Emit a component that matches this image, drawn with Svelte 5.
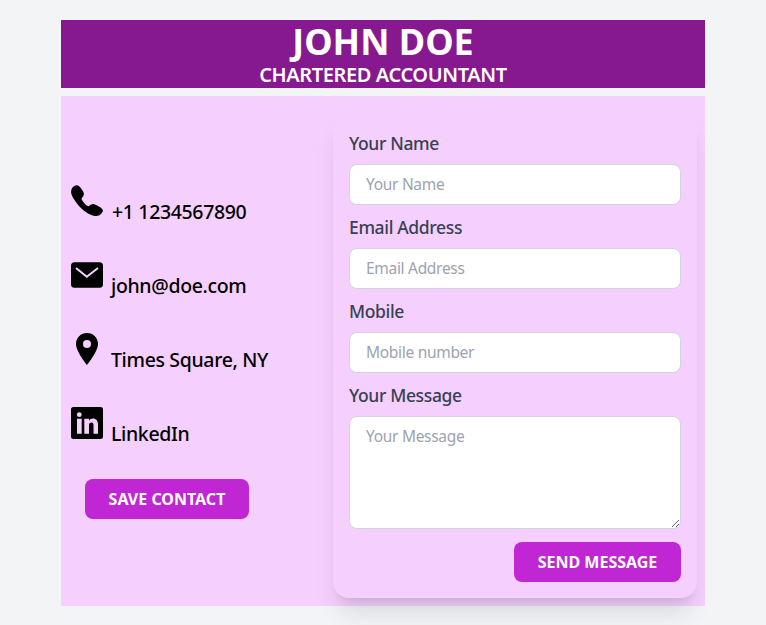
<script>
  // contact card: details on the left, message form on the right
  const fields = [
    { label: "Your Name", placeholder: "Your Name" },
    { label: "Email Address", placeholder: "Email Address" },
    { label: "Mobile", placeholder: "Mobile number" }
  ];
</script>

<main class="page">
  <header class="banner">
    <h1>JOHN DOE</h1>
    <h2>CHARTERED ACCOUNTANT</h2>
  </header>

  <section class="body">
    <div class="details">
      <p class="row">
        <svg viewBox="0 0 32 32"><path d="M1.500 2.500C3 .6 5.500-.6 7.500.8c2.200 1.600 4.600 5.200 5.300 7.500.4 1.700-.5 3.200-1.900 4.600-.4.500-.3 1.300.1 2.100 1.100 2 3 4.300 5.100 5.700.9.600 1.700.6 2.300.1 1.300-1.100 2.900-2.100 4.700-1.600 2.500.7 6.500 2.800 8.100 4.700 1 1.300.7 2.900-.4 4.200-1.400 1.700-3.300 3-5.500 3-4.500-.1-10-3.200-14.300-7.100C6.300 19.600 1.900 13.400.5 9.300-.3 6.900.2 4.300 1.500 2.500z"/></svg>
        <span class="nudge">+1 1234567890</span>
      </p>
      <p class="row">
        <svg viewBox="0 0 32 32"><rect y="3.300" width="32" height="25.400" rx="3.500"/><path class="cut" d="M5 9 15.800 17.800 27 9"/></svg>
        <span>john@doe.com</span>
      </p>
      <p class="row">
        <svg viewBox="0 0 32 32"><path fill-rule="evenodd" d="M16 0C9.800 0 5 4.800 5 11c0 7.600 11 21 11 21s11-13.400 11-21C27 4.800 22.200 0 16 0zm0 15a4 4 0 1 1 0-8 4 4 0 0 1 0 8z"/></svg>
        <span>Times Square, NY</span>
      </p>
      <p class="row">
        <svg viewBox="0 0 32 32"><path fill-rule="evenodd" d="M2.500 0h27A2.500 2.500 0 0 1 32 2.500v27a2.500 2.500 0 0 1-2.500 2.500h-27A2.500 2.500 0 0 1 0 29.500v-27A2.500 2.500 0 0 1 2.500 0zM8.300 5.300a2.400 2.400 0 1 0 0 4.800 2.400 2.400 0 0 0 0-4.800zM6 11.800v15h4.700v-15zM13.300 11.800v15H18v-8c0-2 .9-3.200 2.500-3.200s2 1.200 2 3.200v8h4.500v-9c0-4.200-2-6.300-5-6.300-1.900 0-3.300.8-4 2v-1.700z"/></svg>
        <span>LinkedIn</span>
      </p>
      <button class="action save" type="button">SAVE CONTACT</button>
    </div>

    <form class="card">
      {#each fields as field}
        <label class="field">
          <span>{field.label}</span>
          <input type="text" placeholder={field.placeholder} />
        </label>
      {/each}
      <label class="field">
        <span>Your Message</span>
        <textarea placeholder="Your Message"></textarea>
      </label>
      <div class="actions">
        <button class="action send" type="button">SEND MESSAGE</button>
      </div>
    </form>
  </section>
</main>

<style>
  :global(body) {
    margin: 0;
    background: #f3f4f6;
    font-family: "Noto Sans", "Open Sans", sans-serif;
  }
  .page {
    width: 644px;
    margin: 0 auto;
    padding-top: 20px;
    height: 605px;
  }
  .banner {
    height: 68px;
    background: #86198f;
    color: #fff;
    text-align: center;
  }
  h1 {
    margin: 0;
    font-size: 36px;
    line-height: 43px;
    font-weight: 700;
  }
  h2 {
    margin: 0;
    font-size: 20px;
    line-height: 24px;
    font-weight: 600;
    letter-spacing: -0.4px;
  }
  .body {
    margin-top: 8px;
    height: 510px;
    background: #f5d0fe;
    display: grid;
    grid-template-columns: 272px 364px;
  }
  .details {
    padding: 88px 0 0 10px;
  }
  .row {
    margin: 0 0 32px;
    height: 42px;
    display: flex;
    align-items: flex-end;
    gap: 8px;
    color: #000;
    font-size: 19.5px;
    letter-spacing: -0.35px;
    line-height: 28px;
    font-weight: 500;
  }
  .row:nth-child(4) {
    margin-bottom: 31px;
  }
  .row svg {
    width: 32px;
    height: 32px;
    margin-bottom: 9px;
    flex: none;
  }
  .cut {
    fill: none;
    stroke: #f5d0fe;
    stroke-width: 2;
  }
  .nudge {
    margin-left: 1px;
  }
  .action {
    height: 40px;
    border: 0;
    border-radius: 8px;
    background: #c026d3;
    color: #fff;
    font: 700 16px "Noto Sans", "Open Sans", sans-serif;
    padding: 0;
  }
  .save {
    width: 164px;
    margin: 0 0 0 14px;
  }
  .send {
    width: 167px;
  }
  .card {
    margin-top: 16px;
    height: 486px;
    box-sizing: border-box;
    padding: 18px 16px 16px;
    border-radius: 16px;
    background: #f5d0fe;
    box-shadow: 0 20px 25px -5px rgba(0, 0, 0, 0.1), 0 8px 10px -6px rgba(0, 0, 0, 0.1);
  }
  .field {
    display: block;
    margin-bottom: 9px;
  }
  .field span {
    display: block;
    height: 26px;
    margin-bottom: 8px;
    font-size: 17.5px;
    letter-spacing: -0.35px;
    line-height: 26px;
    font-weight: 500;
    color: #374151;
  }
  input,
  textarea {
    display: block;
    box-sizing: border-box;
    width: 100%;
    height: 41px;
    margin: 0;
    padding: 0 16px 1px;
    border: 1px solid #d1d5db;
    border-radius: 8px;
    background: #fff;
    font: 400 15.5px "Noto Sans", "Open Sans", sans-serif;
    letter-spacing: -0.3px;
    color: #374151;
  }
  textarea {
    height: 113px;
    padding-top: 8px;
  }
  input::placeholder,
  textarea::placeholder {
    color: #9ca3af;
    opacity: 1;
  }
  .actions {
    display: flex;
    justify-content: flex-end;
    margin-top: 13px;
  }
</style>
